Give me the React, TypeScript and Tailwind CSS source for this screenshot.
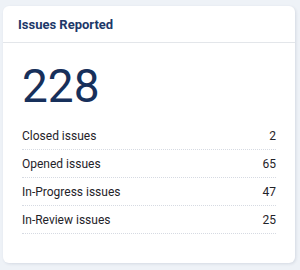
const rows = [
  { label: "Closed issues", value: 2 },
  { label: "Opened issues", value: 65 },
  { label: "In-Progress issues", value: 47 },
  { label: "In-Review issues", value: 25 },
];

export default function App() {
  return (
    <div className="h-[270px] w-[300px] bg-[#eef2f7] pl-[3px] pt-[6px] font-['Roboto',sans-serif]">
      <div className="flex h-[257px] w-[292px] flex-col rounded-[6px] bg-white shadow-[1px_1px_3px_rgba(30,50,90,0.12)]">
        <div className="flex h-[37px] items-center border-b border-[#e3e6ea] px-[15px]">
          <h3 className="text-[13px] font-bold leading-none text-[#1d3869]">Issues Reported</h3>
        </div>

        <div className="px-[19px]">
          <p className="mt-[20px] text-[46px] leading-none text-[#17305b]">228</p>

          <ul className="mt-[13px]">
            {rows.map((row) => (
              <li
                key={row.label}
                className="flex items-center justify-between border-b border-dotted border-[#d6dae2] pb-[5px] pt-[6px] text-[12px] leading-4 text-[#1f2329]"
              >
                <span>{row.label}</span>
                <span>{row.value}</span>
              </li>
            ))}
          </ul>
        </div>
      </div>
    </div>
  );
}
